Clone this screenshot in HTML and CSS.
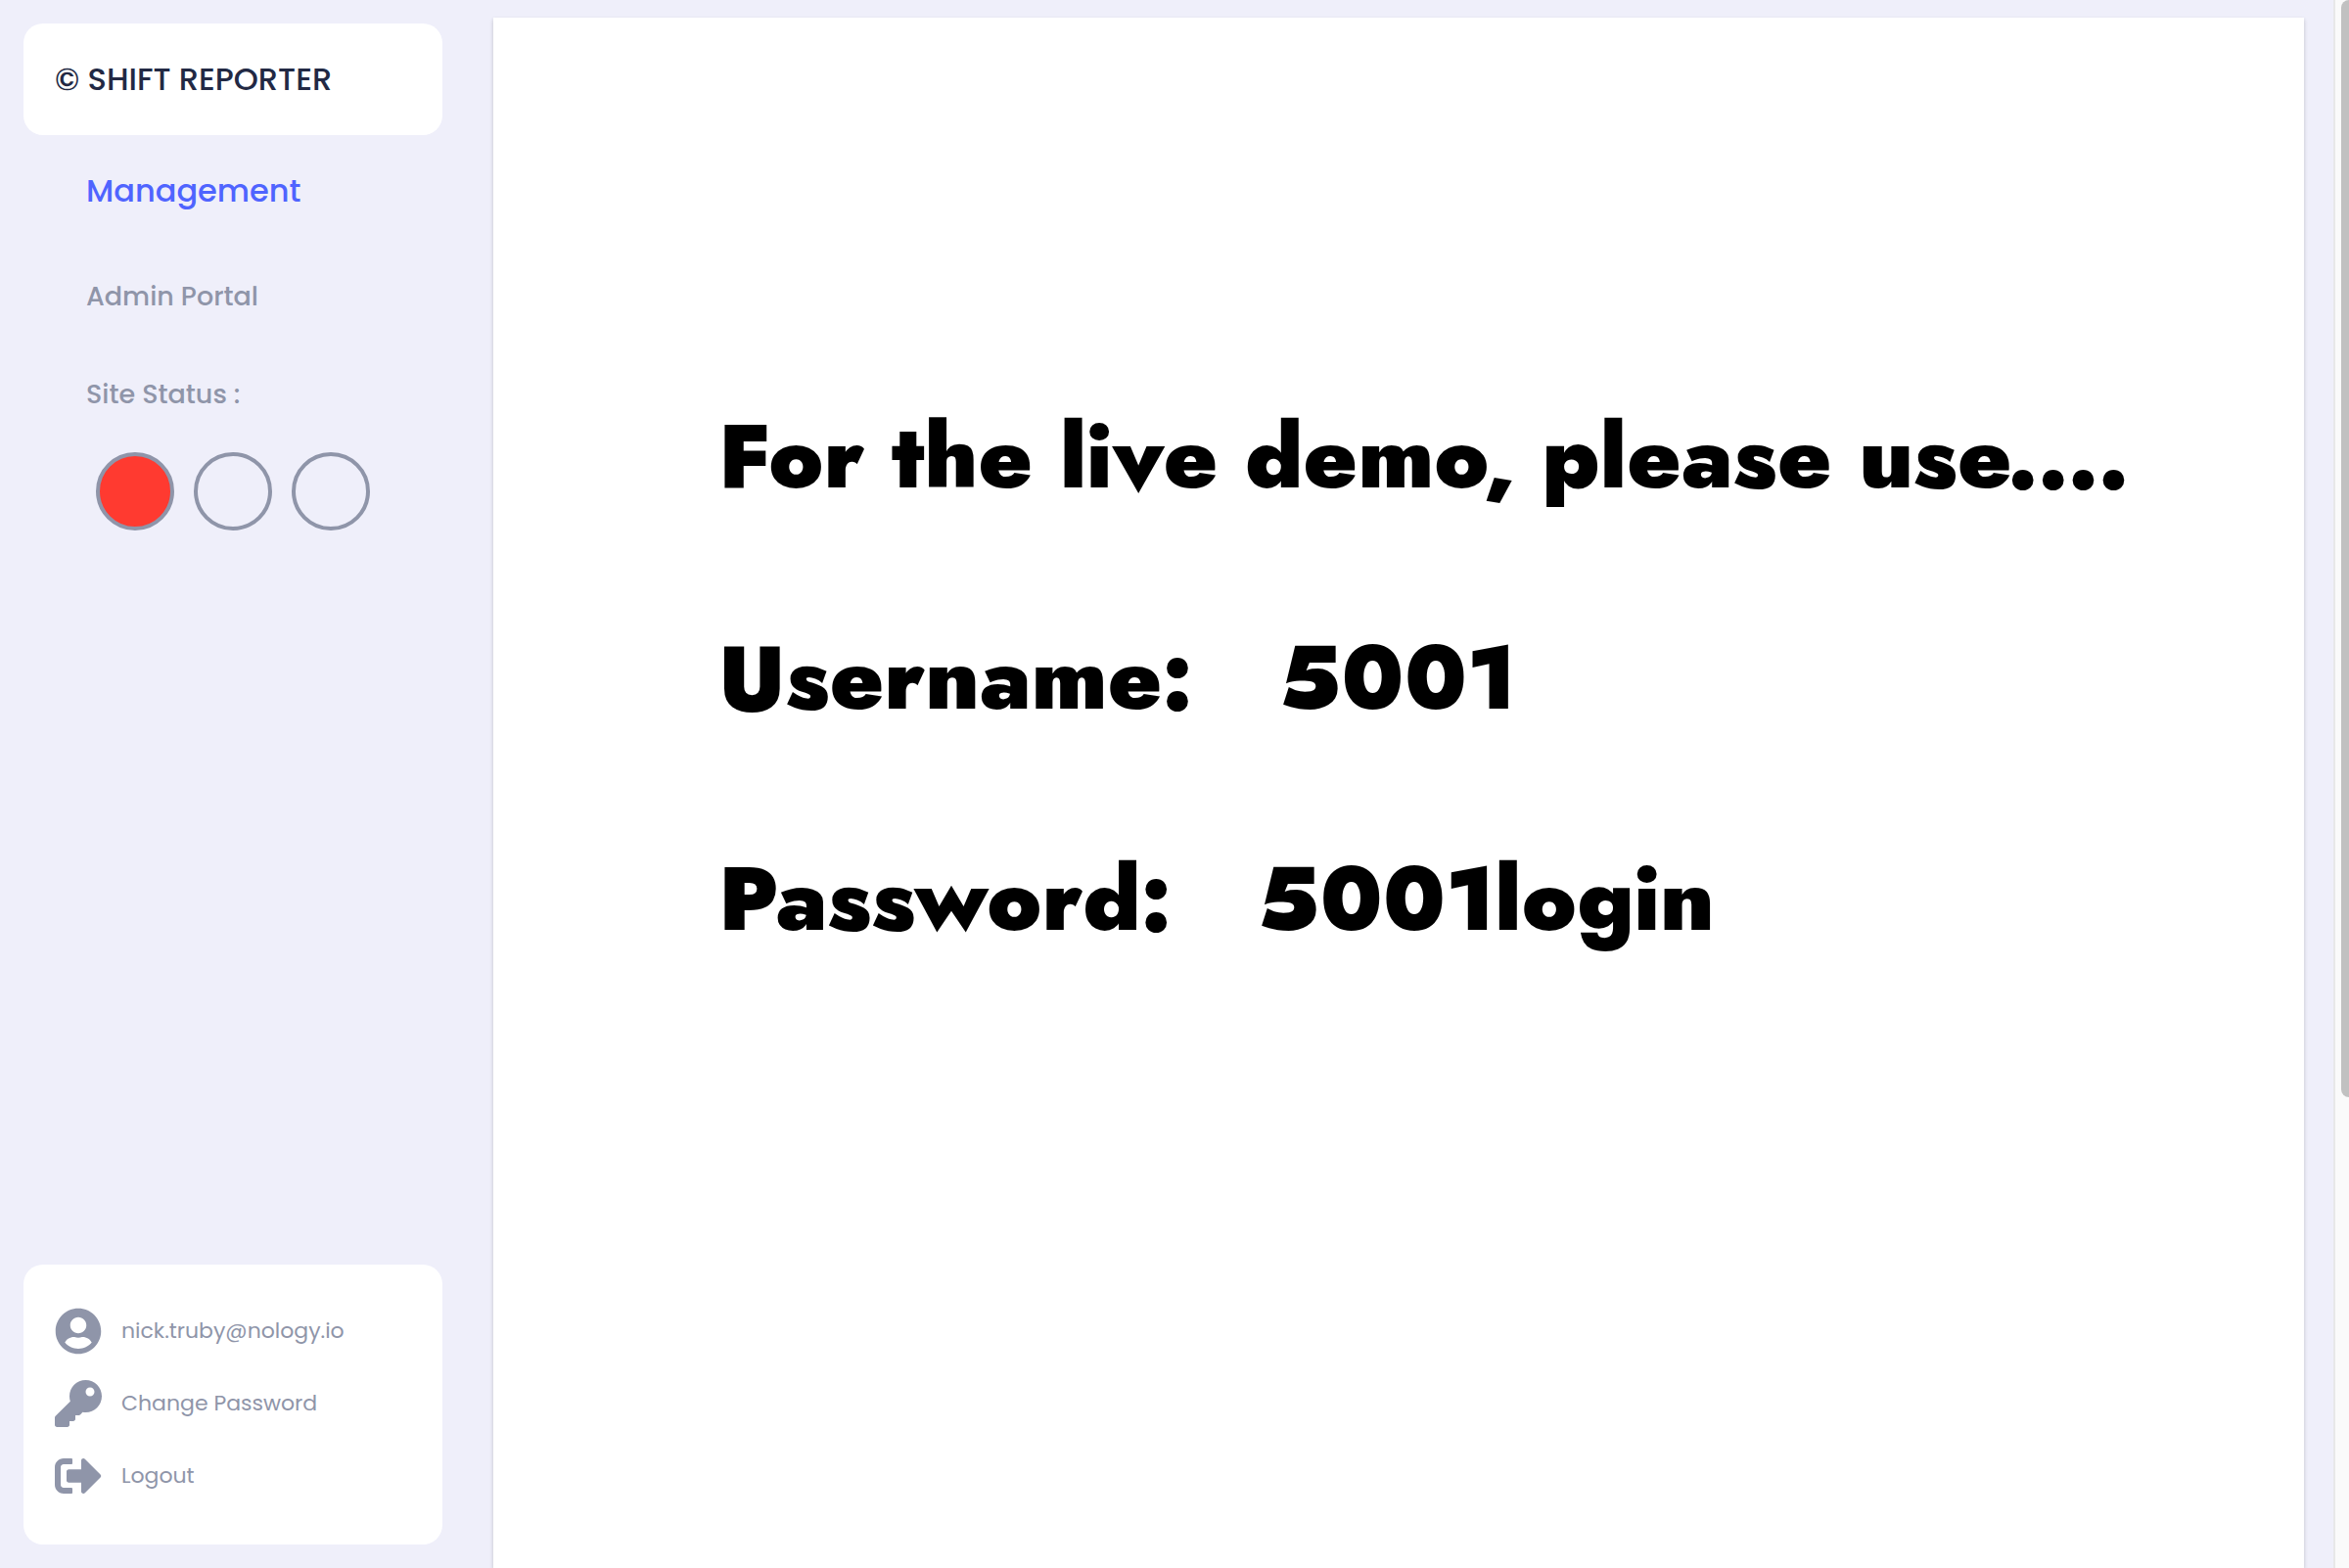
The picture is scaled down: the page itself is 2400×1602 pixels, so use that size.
FILE: index.html
```html
<!DOCTYPE html>
<html lang="en">
<head>
<meta charset="utf-8">
<title>Shift Reporter</title>
<link rel="stylesheet" href="styles.css">
</head>
<body>
<div class="app">
  <aside class="sidebar">
    <header class="card brand">© SHIFT REPORTER</header>
    <nav class="nav">
      <a class="nav-title" href="#management">Management</a>
      <a class="nav-link" href="#admin">Admin Portal</a>
      <p class="nav-link">Site Status :</p>
      <div class="lights">
        <span class="light light-red"></span>
        <span class="light"></span>
        <span class="light"></span>
      </div>
    </nav>
    <div class="card account">
      <a class="account-link" href="#profile">
        <svg class="icon" viewBox="-8 0 512 512" aria-hidden="true"><path d="M248 8C111 8 0 119 0 256s111 248 248 248 248-111 248-248S385 8 248 8zm0 96c48.600 0 88 39.400 88 88s-39.400 88-88 88-88-39.400-88-88 39.400-88 88-88zm0 344c-58.700 0-111.300-26.600-146.500-68.200 18.800-35.400 55.600-59.800 98.500-59.800 2.400 0 4.800.400 7.100 1.100 13 4.200 26.600 6.900 40.900 6.900 14.300 0 28-2.700 40.900-6.900 2.300-.700 4.700-1.100 7.100-1.100 42.900 0 79.700 24.400 98.500 59.800C359.300 421.400 306.700 448 248 448z"/></svg>
        <span>nick.truby@nology.io</span>
      </a>
      <a class="account-link" href="#password">
        <svg class="icon" viewBox="0 0 512 512" aria-hidden="true"><path d="M512 176.001C512 273.203 433.202 352 336 352c-11.220 0-22.190-1.062-32.827-3.069l-24.012 27.014A23.999 23.999 0 0 1 261.223 384H224v40c0 13.255-10.745 24-24 24h-40v40c0 13.255-10.745 24-24 24H24c-13.255 0-24-10.745-24-24v-78.059c0-6.365 2.529-12.470 7.029-16.971l161.802-161.802C163.108 213.814 160 195.271 160 176 160 78.798 238.797.001 335.999 0 433.488-.001 512 78.511 512 176.001zM336 128c0 26.510 21.490 48 48 48s48-21.490 48-48-21.490-48-48-48-48 21.490-48 48z"/></svg>
        <span>Change Password</span>
      </a>
      <a class="account-link" href="#logout">
        <svg class="icon" viewBox="0 0 512 512" aria-hidden="true"><path d="M497 273L329 441c-15 15-41 4.500-41-17v-96H152c-13.300 0-24-10.700-24-24v-96c0-13.300 10.700-24 24-24h136V88c0-21.400 25.900-32 41-17l168 168c9.300 9.400 9.300 24.600 0 34zM192 436v-40c0-6.600-5.400-12-12-12H96c-17.700 0-32-14.300-32-32V160c0-17.700 14.300-32 32-32h84c6.600 0 12-5.400 12-12V76c0-6.600-5.400-12-12-12H96c-53 0-96 43-96 96v192c0 53 43 96 96 96h84c6.600 0 12-5.400 12-12z"/></svg>
        <span>Logout</span>
      </a>
    </div>
  </aside>
  <main class="content">
    <h1 class="line">For the live demo, please use....</h1>
    <p class="line"><span>Username:</span><span>5001</span></p>
    <p class="line"><span>Password:</span><span>5001login</span></p>
  </main>
  <div class="scrollbar"><div class="thumb"></div></div>
</div>
</body>
</html>
```
FILE: styles.css
```css
* {
  box-sizing: border-box;
  margin: 0;
}

body {
  background: #efeffa;
  font-family: "Poppins", "Inter", sans-serif;
  color: #8f95a9;
}

a {
  color: inherit;
  text-decoration: none;
}

.app {
  display: flex;
  min-height: 100vh;
}

.sidebar {
  flex: 0 0 21%;
  display: flex;
  flex-direction: column;
  padding: 24px 52px 24px 24px;
}

.card {
  background: #fff;
  border-radius: 20px;
  padding: 32px;
}

.brand {
  color: #222944;
  font-size: 32px;
  font-weight: 500;
  line-height: 50px;
}

.nav {
  display: flex;
  flex-direction: column;
  padding: 32px 64px;
}

.nav-title {
  color: #4f64ff;
  font-size: 32px;
  font-weight: 500;
  line-height: 50px;
  margin-bottom: 33px;
}

.nav-link {
  font-size: 27px;
  font-weight: 500;
  line-height: 100px;
}

.lights {
  display: flex;
  gap: 20px;
  padding: 9px 10px;
}

.light {
  width: 80px;
  height: 80px;
  border: 4px solid #8f95a9;
  border-radius: 50%;
}

.light-red {
  background: #ff3a30;
}

.account {
  display: flex;
  flex-direction: column;
  gap: 26px;
  margin-top: auto;
  padding: 44px 32px 46px;
}

.account-link {
  display: flex;
  align-items: center;
  gap: 20px;
  font-size: 22px;
  line-height: 48px;
}

.icon {
  width: 48px;
  height: 48px;
  fill: currentColor;
}

.content {
  flex: 1;
  margin-top: 18px;
  padding: 336px 120px 64px 230px;
  background: #fff;
  box-shadow: 0 2px 4px rgba(0, 0, 0, 0.2);
  color: #000;
  font-family: "Futura", "Jost", "Poppins", "Lato", sans-serif;
}

.line {
  display: flex;
  gap: 88px;
  font-size: 92px;
  font-weight: 900;
  line-height: 226px;
}

.scrollbar {
  flex: none;
  width: 16px;
  margin-left: 30px;
  border-left: 2px solid #e8e8e8;
  padding-left: 6px;
  background: #fafafa;
  height: 100vh;
}

.thumb {
  height: 70%;
  background: #c1c1c1;
  border-radius: 8px 0 0 8px;
}
```
